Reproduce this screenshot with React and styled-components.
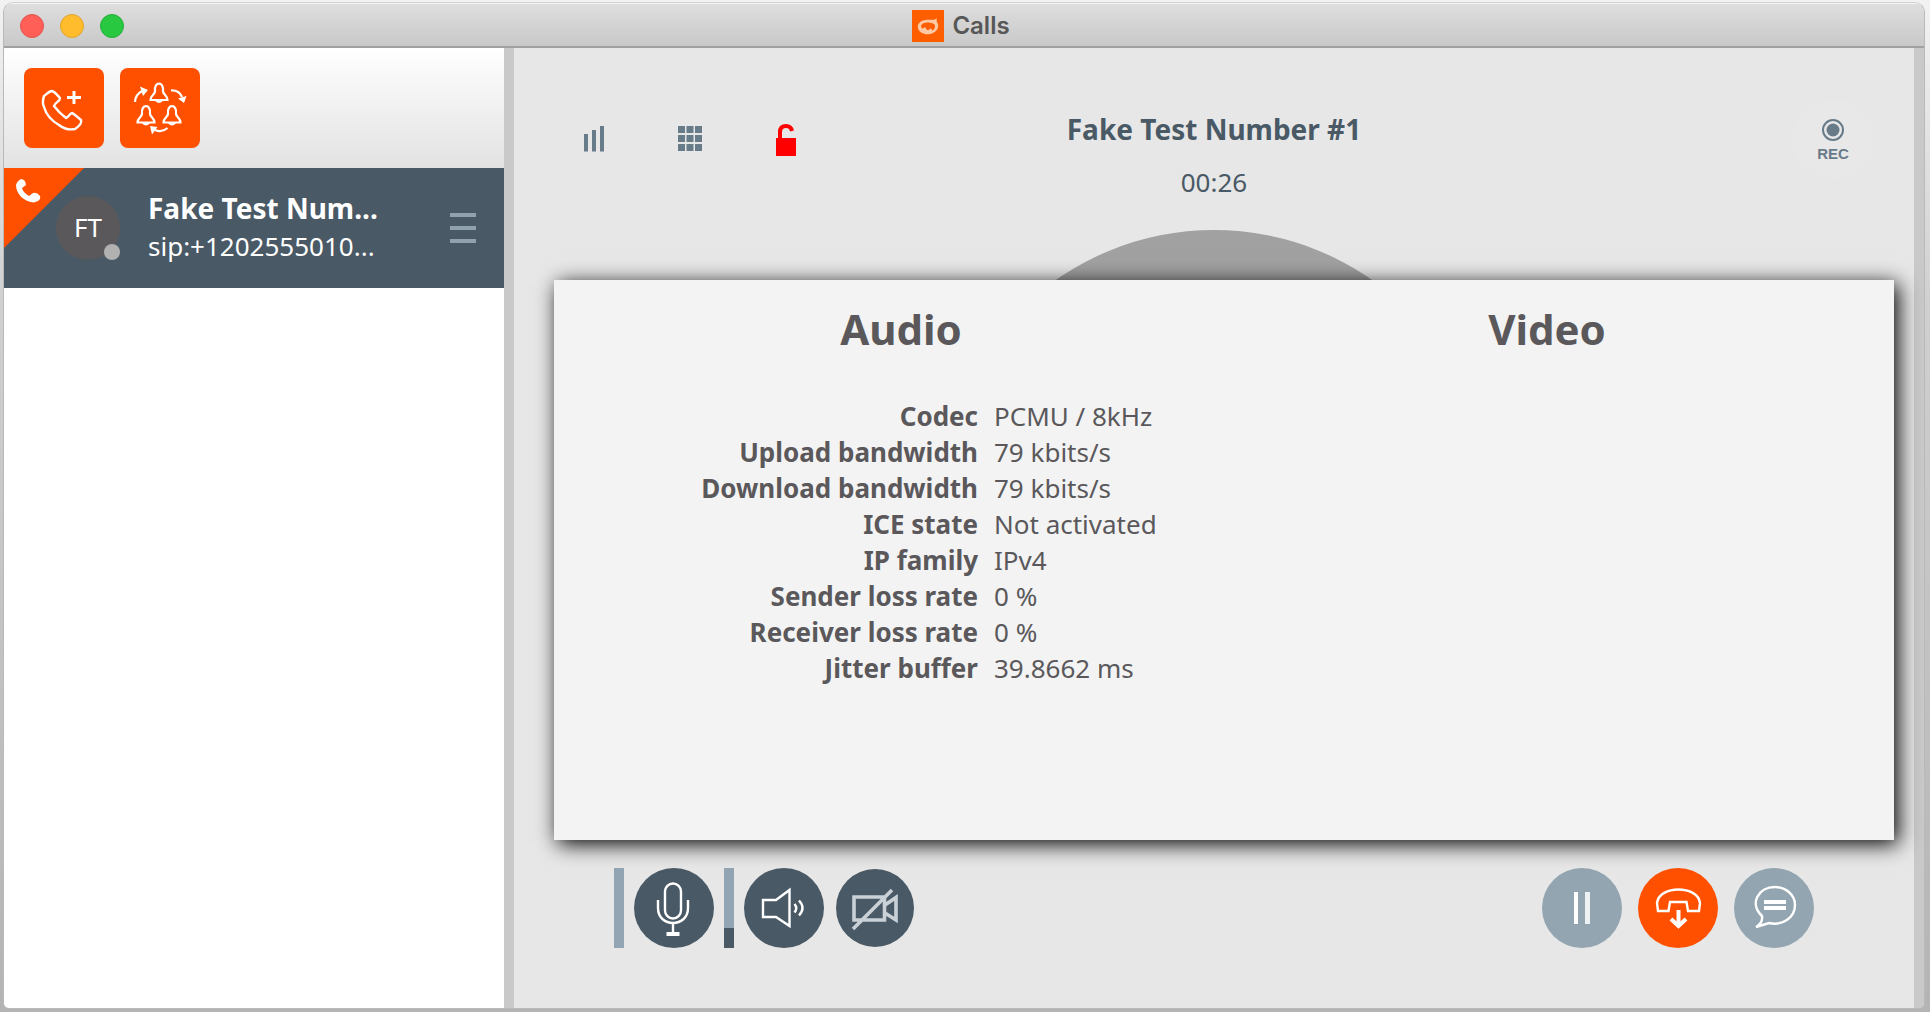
import React from "react";
import styled, { createGlobalStyle } from "styled-components";

const GlobalStyle = createGlobalStyle`
  *, *::before, *::after { box-sizing: border-box; }
  html, body, #root { height: 100%; }
  body {
    margin: 0;
    font-family: "Noto Sans", "Open Sans", sans-serif;
    background: linear-gradient(#f2f2f2, #d0d0d0 30%, #b4b4b4);
  }
  button { font: inherit; border: 0; padding: 0; background: none; cursor: pointer; }
  svg { display: block; }
`;

const Page = styled.div`
  min-height: 100%;
  display: flex;
  padding: 2px 5px 3px 3px;
`;

const Window = styled.div`
  flex: 1;
  display: flex;
  flex-direction: column;
  border: 1px solid #b9b9b9;
  border-top-color: #d2d2d2;
  border-radius: 10px 10px 6px 6px;
  overflow: hidden;
  background: #e7e7e7;
`;

const TitleBar = styled.header`
  display: grid;
  grid-template-columns: 1fr auto 1fr;
  align-items: center;
  height: 45px;
  padding: 2px 22px 0 16px;
  background: linear-gradient(#dedede, #c9c9c9);
  border-top: 1px solid #f2f2f2;
  border-bottom: 2px solid #a0a0a0;
`;

const Lights = styled.div`
  display: flex;
  gap: 16px;
`;

const Light = styled.button`
  width: 24px;
  height: 24px;
  border-radius: 50%;
  background: ${(p) => p.$color};
  border: 1px solid ${(p) => p.$edge};
`;

const WindowTitle = styled.div`
  display: flex;
  align-items: center;
  gap: 8px;
  color: #575757;
  font: 600 24px/32px Inter, Roboto, sans-serif;
`;

const Body = styled.div`
  flex: 1;
  display: flex;
`;

const Sidebar = styled.aside`
  width: 500px;
  background: #fff;
`;

const SideToolbar = styled.div`
  display: flex;
  gap: 16px;
  padding: 20px;
  background: linear-gradient(#fff, #e2e2e2);
`;

const SquareButton = styled.button`
  width: 80px;
  height: 80px;
  border-radius: 8px;
  background: #ff5000;
`;

const CallItem = styled.div`
  position: relative;
  display: flex;
  align-items: center;
  height: 120px;
  padding: 0 21px 0 52px;
  background: #495965;
  color: #fff;
`;

const Corner = styled.div`
  position: absolute;
  top: 0;
  left: 0;
`;

const Avatar = styled.div`
  position: relative;
  width: 64px;
  height: 64px;
  border-radius: 50%;
  background: #5a585b;
  font-size: 26px;
  line-height: 62px;
  text-align: center;
`;

const Presence = styled.span`
  position: absolute;
  right: 0;
  bottom: 0;
  width: 16px;
  height: 16px;
  border-radius: 50%;
  background: #b1b1b1;
`;

const Identity = styled.div`
  flex: 1;
  margin-left: 28px;
  padding-bottom: 2px;
  font-size: 26px;
  line-height: 38px;
`;

const Name = styled.div`
  font-size: 28px;
  font-weight: 700;
`;

const MenuButton = styled.button`
  display: flex;
  flex-direction: column;
  gap: 9px;
  align-items: center;
  width: 40px;
`;

const MenuLine = styled.span`
  width: 26px;
  height: 4px;
  background: #8fa2ae;
`;

const Divider = styled.div`
  width: 10px;
  background: #c9c9c9;
`;

const Main = styled.main`
  flex: 1;
  display: flex;
  flex-direction: column;
`;

const CallHeader = styled.div`
  display: grid;
  grid-template-columns: 1fr auto 1fr;
  align-items: center;
  height: 182px;
  padding: 0 40px;
  color: #495965;
`;

const Tools = styled.div`
  display: flex;
  gap: 56px;
  padding-left: 20px;
`;

const ToolButton = styled.button`
  width: 40px;
  height: 40px;
`;

const CallInfo = styled.div`
  align-self: end;
  padding-bottom: 28px;
  text-align: center;
`;

const Callee = styled.h1`
  margin: 0 0 13px;
  font-size: 28px;
  line-height: 40px;
  font-weight: 700;
`;

const Timer = styled.div`
  font-size: 26px;
  line-height: 40px;
`;

const RecordButton = styled.button`
  justify-self: end;
  display: flex;
  flex-direction: column;
  align-items: center;
  justify-content: center;
  gap: 3px;
  width: 82px;
  height: 80px;
  border-radius: 50%;
  background: #e8e8e8;
  color: #687b88;
  font: 700 15px/16px "Liberation Sans", Arial, sans-serif;
`;

const Stage = styled.section`
  position: relative;
  flex: 1;
`;

const BigAvatar = styled.div`
  width: 550px;
  height: 550px;
  margin: 0 auto;
  border-radius: 50%;
  background: #a1a1a1;
`;

const StatsPopup = styled.div`
  position: absolute;
  inset: 50px 20px 0 40px;
  display: grid;
  grid-template-columns: 1fr 1fr;
  padding: 19px 24px;
  background: #f3f3f3;
  color: #5a585b;
  box-shadow: 4px 4px 20px #000;
`;

const StatsTitle = styled.h2`
  margin: 0 0 39px;
  font-size: 42px;
  line-height: 60px;
  font-weight: 700;
  text-align: center;
`;

const StatsTable = styled.table`
  width: 100%;
  border-collapse: collapse;
  font-size: 26px;
  line-height: 36px;

  th, td { padding: 0 8px; }
  th { width: 408px; text-align: right; font-weight: 700; }
`;

const Controls = styled.footer`
  display: flex;
  justify-content: space-between;
  padding: 28px 100px 60px;
`;

const ControlGroup = styled.div`
  display: flex;
  align-items: center;
  gap: ${(p) => p.$gap}px;
`;

const Meter = styled.div`
  width: 10px;
  height: 80px;
  display: flex;
  align-items: flex-end;
  background: #93a5b2;
`;

const MeterLevel = styled.div`
  width: 100%;
  background: #495965;
`;

const RoundButton = styled.button`
  width: ${(p) => p.$size || 80}px;
  height: ${(p) => p.$size || 80}px;
  margin-left: ${(p) => p.$inset || 0}px;
  border-radius: 50%;
  background: ${(p) => p.$color};
`;

const SLATE = "#495965";
const MIST = "#93a5b0";
const ORANGE = "#ff5000";

const Glyph = ({ size = 80, width = 2.4, stroke = "#fff", children }) => (
  <svg width={size} height={size} viewBox={`0 0 ${size} ${size}`} fill="none" stroke={stroke} strokeWidth={width} aria-hidden="true">
    {children}
  </svg>
);

const Bell = ({ x, y }) => (
  <path
    transform={`translate(${x} ${y})`}
    d="M-4 8.500C-5.500-2 5.500-2 4 8.500C4.500 12 8.500 12.500 8.500 17H-8.500C-8.500 12.500-4.500 12-4 8.500ZM-3 17.500Q0 20 3 17.500"
  />
);

const stats = [
  ["Codec", "PCMU / 8kHz"],
  ["Upload bandwidth", "79 kbits/s"],
  ["Download bandwidth", "79 kbits/s"],
  ["ICE state", "Not activated"],
  ["IP family", "IPv4"],
  ["Sender loss rate", "0 %"],
  ["Receiver loss rate", "0 %"],
  ["Jitter buffer", "39.8662 ms"],
];

const speakerLevel = 25;

export default function App() {
  return (
    <>
      <GlobalStyle />
      <Page>
        <Window>
          <TitleBar>
            <Lights>
              <Light $color="#ff5f57" $edge="#e2534c" aria-label="Close" />
              <Light $color="#ffbd2e" $edge="#e0a42a" aria-label="Minimize" />
              <Light $color="#28c940" $edge="#22ae38" aria-label="Zoom" />
            </Lights>
            <WindowTitle>
              <svg width="32" height="32" viewBox="0 0 32 32" fill="none" aria-hidden="true">
                <rect width="32" height="32" fill="#ff5e00" />
                <path d="M25 8C22 11 18 9 13 10C8 11 5 14 6 18C7 23 13 25 18 24C24 23 27 18 26 14C25 12 24 11 25 8Z" fill="#ffc9a6" />
                <path d="M9 16C10 12 17 11.500 22 14C24 16 23 20 20 20.500C20 19 19 18 18 19C16 21 14 20 14 18C12 17 11 18 11 19Q9 18 9 16Z" fill="#ff5e00" />
              </svg>
              Calls
            </WindowTitle>
          </TitleBar>
          <Body>
            <Sidebar>
              <SideToolbar>
                <SquareButton aria-label="New call">
                  <Glyph>
                    <path d="M28 23C31 24 34 28 36 30C36 34 31 34 30 38C33 42 38 47 42 50C45 49 46 45 48 45C51 46 54 50 57 52C58 55 54 59 51 61C46 62 40 61 35 57C28 53 22 46 20 39C18 35 19 31 20 28C23 26 25 23 28 23Z" />
                    <path strokeWidth="3" d="M50 23V36M43 29.500H57" />
                  </Glyph>
                </SquareButton>
                <SquareButton aria-label="New conference">
                  <Glyph width={2.2}>
                    <Bell x={39} y={15} />
                    <Bell x={26} y={37.500} />
                    <Bell x={52} y={37.500} />
                    <path d="M15 34Q15 27 22 23M51 22.500Q59 22 62 29M47.500 60Q42 65 35 62" />
                    <path fill="#fff" stroke="none" d="M20 18.500L28 22L23 28ZM58 30.500L66.500 28L64 35ZM30 58L37.500 59L32 66.500Z" />
                  </Glyph>
                </SquareButton>
              </SideToolbar>
              <CallItem>
                <Corner>
                  <Glyph>
                    <path d="M0 0H80L0 80Z" fill={ORANGE} stroke="none" />
                    <path d="M17 11L20 12Q22 14 22 17L18 20C19 24 22 26 25 28L29 25Q33 24 36 28Q37 31 34 33L30 34.500C20 34 12 26 12 17Q13 13 17 11Z" fill="#fff" stroke="none" />
                  </Glyph>
                </Corner>
                <Avatar>
                  FT
                  <Presence />
                </Avatar>
                <Identity>
                  <Name>Fake Test Num...</Name>
                  <div>sip:+1202555010...</div>
                </Identity>
                <MenuButton aria-label="Call menu">
                  <MenuLine />
                  <MenuLine />
                  <MenuLine />
                </MenuButton>
              </CallItem>
            </Sidebar>
            <Divider />
            <Main>
              <CallHeader>
                <Tools>
                  <ToolButton aria-label="Call quality">
                    <Glyph size={40} width={4} stroke="#687b88">
                      <path d="M12 15V32.500M20 11V32.500M28 7V32.500" />
                    </Glyph>
                  </ToolButton>
                  <ToolButton aria-label="Keypad">
                    <Glyph size={40} width={7} stroke="#687b88">
                      <path strokeDasharray="7 1.5" d="M8 10.500H32M8 19.500H32M8 28.500H32" />
                    </Glyph>
                  </ToolButton>
                  <ToolButton aria-label="Encryption off">
                    <Glyph size={40} width={4} stroke="#f00">
                      <path d="M14 20V13Q14 7 20 7Q25 7 26 12" />
                      <path d="M10 19H30V37H10Z" fill="#f00" stroke="none" />
                    </Glyph>
                  </ToolButton>
                </Tools>
                <CallInfo>
                  <Callee>Fake Test Number #1</Callee>
                  <Timer>00:26</Timer>
                </CallInfo>
                <RecordButton>
                  <Glyph size={26} width={2} stroke="#687b88">
                    <circle cx="13" cy="13" r="10" />
                    <circle cx="13" cy="13" r="6.500" fill="#687b88" stroke="none" />
                  </Glyph>
                  REC
                </RecordButton>
              </CallHeader>
              <Stage>
                <BigAvatar />
                <StatsPopup>
                  <section>
                    <StatsTitle>Audio</StatsTitle>
                    <StatsTable>
                      <tbody>
                        {stats.map(([label, value]) => (
                          <tr key={label}>
                            <th scope="row">{label}</th>
                            <td>{value}</td>
                          </tr>
                        ))}
                      </tbody>
                    </StatsTable>
                  </section>
                  <section>
                    <StatsTitle>Video</StatsTitle>
                  </section>
                </StatsPopup>
              </Stage>
              <Controls>
                <ControlGroup $gap={10}>
                  <Meter />
                  <RoundButton $color={SLATE} aria-label="Mute microphone">
                    <Glyph>
                      <rect x="31" y="15.500" width="16" height="35" rx="8" />
                      <path d="M24 32V40C24 60 54 60 54 40V32M39 56V66" />
                      <path strokeWidth="4" d="M32.500 66H45.500" />
                    </Glyph>
                  </RoundButton>
                  <Meter>
                    <MeterLevel style={{ height: `${speakerLevel}%` }} />
                  </Meter>
                  <RoundButton $color={SLATE} aria-label="Mute speaker">
                    <Glyph>
                      <path d="M19 32H32L45.500 22V58L32 49H19ZM50.500 36Q54 40 50.500 44.500M55 32.500Q62 40 55 47.500" />
                    </Glyph>
                  </RoundButton>
                  <RoundButton $color={SLATE} $size={78} $inset={2} aria-label="Start camera">
                    <Glyph size={78} width={3.6} stroke="#c9d1d7">
                      <path d="M18 28H48.500V51H18ZM49 36L60 28.500V51L49 44M17 60L56 21" />
                    </Glyph>
                  </RoundButton>
                </ControlGroup>
                <ControlGroup $gap={16}>
                  <RoundButton $color={MIST} aria-label="Pause call">
                    <Glyph width={4}>
                      <path d="M34 24V56" />
                      <path strokeWidth="5" d="M45.500 24V56" opacity="0.85" />
                    </Glyph>
                  </RoundButton>
                  <RoundButton $color={ORANGE} aria-label="Hang up">
                    <Glyph>
                      <path d="M20 43L19 35C21 17 60 17 62 35L61 43H50L48.500 34H32L30.500 43Z" />
                      <path strokeWidth="4" d="M40.500 42V58M33 51L40.500 58L48 51" />
                    </Glyph>
                  </RoundButton>
                  <RoundButton $color={MIST} aria-label="Open chat">
                    <Glyph>
                      <path d="M28 48C15 36 24 19 41 19C52 19 61 27 61 37C61 50 48 58 35 55L22 59Q29 55 28 48Z" />
                      <path strokeWidth="4" d="M30 34H52M30 40H52" />
                    </Glyph>
                  </RoundButton>
                </ControlGroup>
              </Controls>
            </Main>
            <Divider />
          </Body>
        </Window>
      </Page>
    </>
  );
}
